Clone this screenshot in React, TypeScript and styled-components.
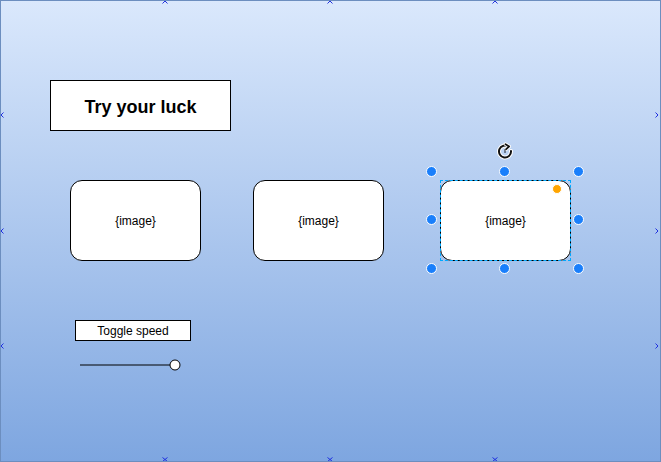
import React from "react";
import styled, { createGlobalStyle } from "styled-components";

const Global = createGlobalStyle`
  html, body { margin: 0; padding: 0; background: #ffffff; }
  body { font-family: "Liberation Sans", Arial, sans-serif; }
`;

const Canvas = styled.div`
  position: relative;
  width: 661px;
  height: 462px;
  box-sizing: border-box;
  border: 1px solid #6c8ebf;
  background: linear-gradient(180deg, #dae8fc 0%, #7ea6e0 100%);
  overflow: hidden;
`;

const Node = styled.div<{ $x: number; $y: number; $w: number; $h: number }>`
  position: absolute;
  left: ${(p) => p.$x - 1}px;
  top: ${(p) => p.$y - 1}px;
  width: ${(p) => p.$w}px;
  height: ${(p) => p.$h}px;
  box-sizing: border-box;
  display: flex;
  align-items: center;
  justify-content: center;
  background: #ffffff;
  border: 1px solid #000000;
  color: #000000;
`;

const TitleBox = styled(Node)`
  font-size: 18px;
  font-weight: bold;
  padding-top: 3px;
`;

const Card = styled(Node)`
  border-radius: 12px;
  font-size: 12px;
`;

const Label = styled(Node)`
  font-size: 12px;
`;

const Selection = styled.div`
  position: absolute;
  inset: -1px;
  border: 1px dashed #00a8ff;
  pointer-events: none;
`;

const Handle = styled.div<{ $x: number; $y: number; $color: string; $size: number }>`
  position: absolute;
  left: ${(p) => p.$x - p.$size / 2}px;
  top: ${(p) => p.$y - p.$size / 2}px;
  width: ${(p) => p.$size}px;
  height: ${(p) => p.$size}px;
  box-sizing: border-box;
  border-radius: 50%;
  background: ${(p) => p.$color};
  border: 1.5px solid #ffffff;
`;

const Overlay = styled.svg<{ $x: number; $y: number }>`
  position: absolute;
  left: ${(p) => p.$x}px;
  top: ${(p) => p.$y}px;
  overflow: visible;
`;

const cards = [
  { x: 70, y: 180, selected: false },
  { x: 253, y: 180, selected: false },
  { x: 440, y: 180, selected: true },
];

/* handle centres relative to the selected card's inner box */
const handles = [
  [-10, -10],
  [63, -10],
  [137, -10],
  [-10, 38],
  [137, 38],
  [-10, 87],
  [63, 87],
  [137, 87],
];

function RotateIcon() {
  return (
    <Overlay $x={55} $y={-39} width="18" height="18" viewBox="0 0 18 18">
      <g fill="none" strokeLinecap="round">
        <path d="M12.5 4.6 A6 6 0 1 0 15 9" stroke="#ffffff" strokeWidth="4" />
        <path d="M12.5 4.6 A6 6 0 1 0 15 9" stroke="#111111" strokeWidth="2" />
        <path d="M9.5 2.2 L13.2 4.4 L10.2 7.2" stroke="#ffffff" strokeWidth="3.5" strokeLinejoin="round" />
        <path d="M9.5 2.2 L13.2 4.4 L10.2 7.2" stroke="#111111" strokeWidth="1.8" strokeLinejoin="round" />
        <path d="M9 7.5 L9 10.5" stroke="#111111" strokeWidth="1" strokeDasharray="1 1" />
      </g>
    </Overlay>
  );
}

function Slider() {
  return (
    <Overlay $x={77} $y={357} width="106" height="14" viewBox="0 0 106 14">
      <line x1="2" y1="7" x2="92" y2="7" stroke="#000000" strokeWidth="1" />
      <circle cx="97" cy="7" r="5" fill="#ffffff" stroke="#000000" strokeWidth="1" />
    </Overlay>
  );
}

const topMarks = [165, 330, 495];
const sideMarks = [115, 231, 346];

export default function App() {
  return (
    <>
      <Global />
      <Canvas>
        <TitleBox $x={50} $y={80} $w={181} $h={51}>
          Try your luck
        </TitleBox>
        {cards.map((c, i) => (
          <Card key={i} $x={c.x} $y={c.y} $w={131} $h={81}>
            {"{image}"}
            {c.selected && (
              <>
                <Selection />
                <RotateIcon />
                {handles.map(([x, y], j) => (
                  <Handle key={j} $x={x} $y={y} $color="#1a7ffb" $size={11} />
                ))}
                <Handle $x={116} $y={8} $color="#ffa500" $size={10} />
              </>
            )}
          </Card>
        ))}
        <Label $x={75} $y={320} $w={116} $h={21}>
          Toggle speed
        </Label>
        <Slider />
        {topMarks.map((x) => (
          <Overlay key={"t" + x} $x={x - 4} $y={-1} width="6" height="4" viewBox="0 0 6 4">
            <path d="M0.5 3.5 L3 1 L5.5 3.5" fill="none" stroke="#2030e0" strokeWidth="1" />
          </Overlay>
        ))}
        {topMarks.map((x) => (
          <Overlay key={"b" + x} $x={x - 4} $y={456} width="6" height="5" viewBox="0 0 6 5">
            <path d="M0.5 0.5 L5.5 4.5 M5.5 0.5 L0.5 4.5" fill="none" stroke="#2030e0" strokeWidth="1" />
          </Overlay>
        ))}
        {sideMarks.map((y) => (
          <Overlay key={"l" + y} $x={-1} $y={y - 4} width="4" height="6" viewBox="0 0 4 6">
            <path d="M3.5 0.5 L1 3 L3.5 5.5" fill="none" stroke="#2030e0" strokeWidth="1" />
          </Overlay>
        ))}
        {sideMarks.map((y) => (
          <Overlay key={"r" + y} $x={654} $y={y - 4} width="4" height="6" viewBox="0 0 4 6">
            <path d="M0.5 0.5 L3 3 L0.5 5.5" fill="none" stroke="#2030e0" strokeWidth="1" />
          </Overlay>
        ))}
      </Canvas>
    </>
  );
}
